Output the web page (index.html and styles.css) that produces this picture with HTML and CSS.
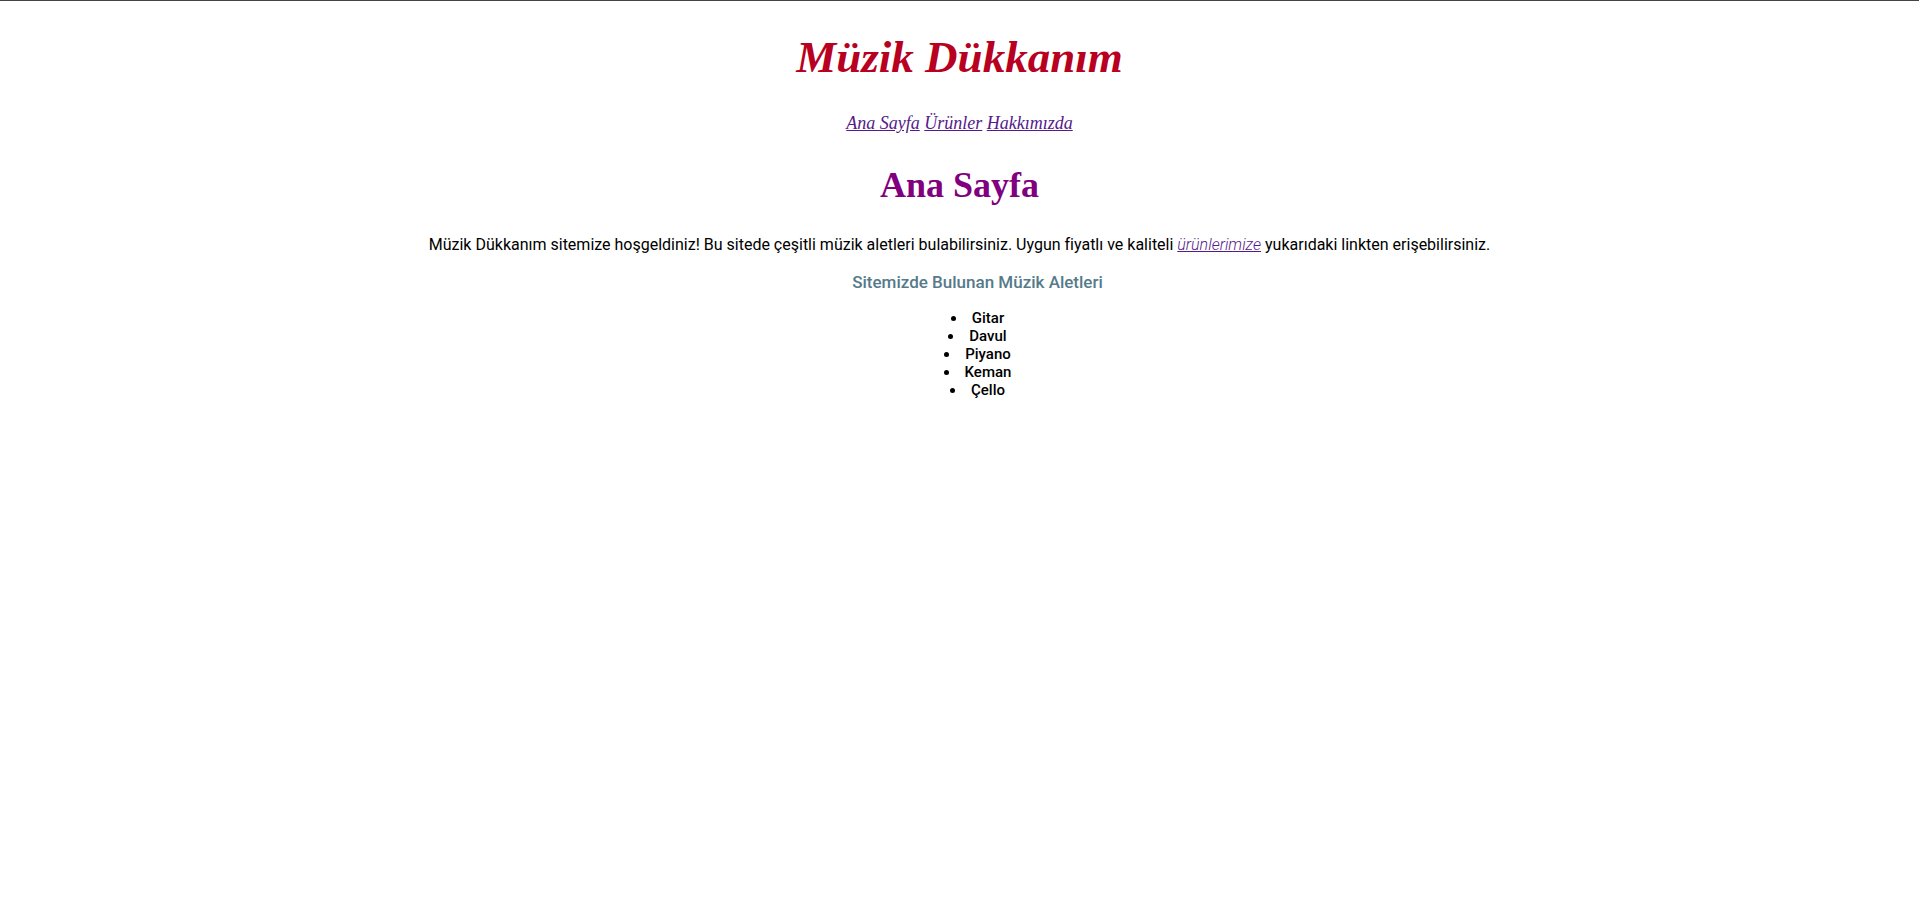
FILE: index.html
```html
<!DOCTYPE html>
<html lang="tr">
<head>
<meta charset="utf-8">
<title>Müzik Dükkanım</title>
<link rel="stylesheet" href="styles.css">
</head>
<body>
<header>
<h1 class="site-title">Müzik Dükkanım</h1>
<nav class="site-nav">
<a href="#ana">Ana Sayfa</a>
<a href="#urunler">Ürünler</a>
<a href="#hakkimizda">Hakkımızda</a>
</nav>
</header>
<main>
<h2 class="page-title">Ana Sayfa</h2>
<p class="intro">Müzik Dükkanım sitemize hoşgeldiniz! Bu sitede çeşitli müzik aletleri bulabilirsiniz. Uygun fiyatlı ve kaliteli <a class="intro-link" href="#urunler">ürünlerimize</a> yukarıdaki linkten erişebilirsiniz.</p>
<section class="instruments">
<h3 class="list-title">Sitemizde Bulunan Müzik Aletleri</h3>
<ul class="list">
<li>Gitar</li>
<li>Davul</li>
<li>Piyano</li>
<li>Keman</li>
<li>Çello</li>
</ul>
</section>
</main>
</body>
</html>
```

FILE: styles.css
```css
body {
  margin: 0;
  padding: 0 8px;
  border-top: 1px solid #444;
  background: #fff;
  color: #000;
  font-family: Roboto, sans-serif;
  font-size: 16px;
  text-align: center;
}
.site-title {
  margin: 28px 0;
  color: #b80021;
  font: italic bold 45px/56px "Liberation Serif", serif;
}
.site-nav {
  font: italic 18px/20px "Liberation Serif", serif;
}
a {
  color: #551a8b;
}
.page-title {
  margin: 32px 0 30px;
  color: #800080;
  font: bold 36px/40px "Liberation Serif", serif;
}
.intro {
  margin: 16px 0;
  line-height: 20px;
}
.intro-link {
  font-style: italic;
  font-weight: 300;
}
.instruments {
  padding-left: 36px;
}
.list-title {
  margin: 0 0 16px;
  color: #557a8a;
  font-size: 17px;
  font-weight: 500;
  line-height: 22px;
}
.list {
  margin: 0;
  padding: 0;
  list-style-position: inside;
  font-size: 15px;
  font-weight: 500;
  line-height: 18px;
}
```
